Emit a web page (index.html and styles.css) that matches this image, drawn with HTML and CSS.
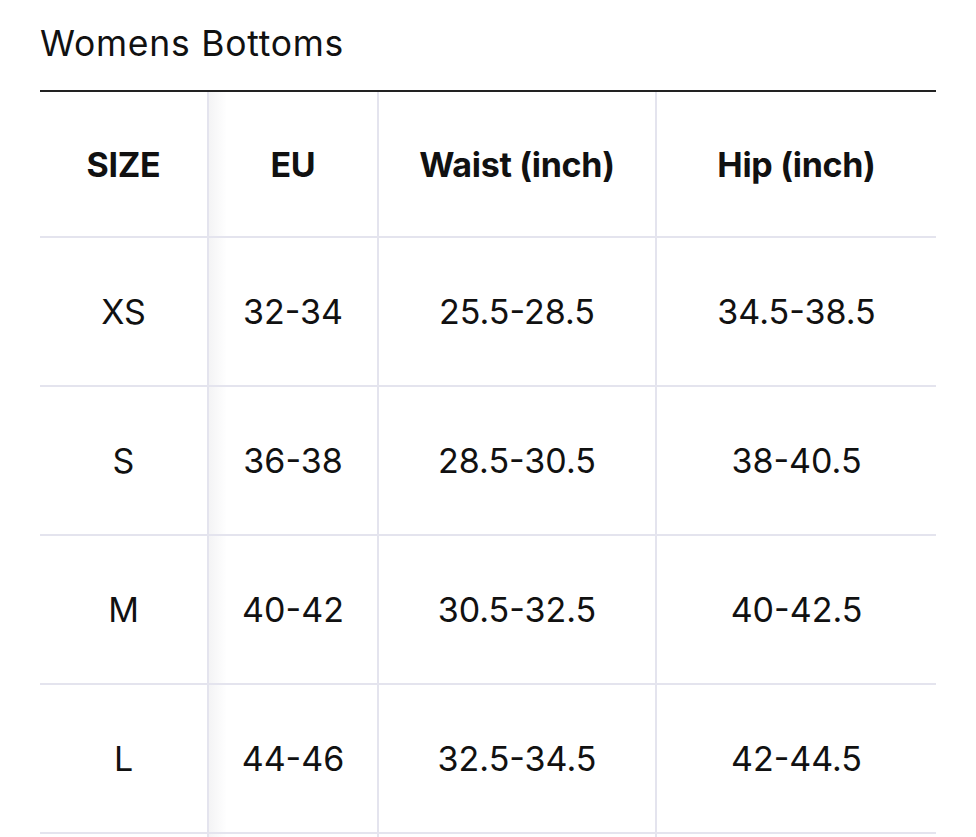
FILE: index.html
```html
<!DOCTYPE html>
<html>
<head>
<meta charset="utf-8">
<link rel="stylesheet" href="styles.css">
</head>
<body>
<div class="page">
  <div class="title">Womens Bottoms</div>
  <table class="chart">
    <colgroup>
      <col class="c1"><col class="c2"><col class="c3"><col class="c4">
    </colgroup>
    <thead>
      <tr><th>SIZE</th><th>EU</th><th>Waist (inch)</th><th>Hip (inch)</th></tr>
    </thead>
    <tbody>
      <tr><td>XS</td><td>32-34</td><td>25.5-28.5</td><td>34.5-38.5</td></tr>
      <tr><td>S</td><td>36-38</td><td>28.5-30.5</td><td>38-40.5</td></tr>
      <tr><td>M</td><td>40-42</td><td>30.5-32.5</td><td>40-42.5</td></tr>
      <tr><td>L</td><td>44-46</td><td>32.5-34.5</td><td>42-44.5</td></tr>
      <tr class="peek"><td></td><td></td><td></td><td></td></tr>
    </tbody>
  </table>
</div>
</body>
</html>
```
FILE: styles.css
```css
html, body {
  margin: 0;
  padding: 0;
  background: #ffffff;
}
body {
  font-family: Inter, "Liberation Sans", sans-serif;
  color: #111111;
  overflow: hidden;
}
.page {
  padding: 0 40px;
}
.title {
  font-size: 35.5px;
  line-height: 42px;
  padding-top: 23px;
  padding-bottom: 25px;
  border-bottom: 2px solid #222222;
  letter-spacing: 0.75px;
}
.chart {
  width: 896px;
  border-collapse: separate;
  border-spacing: 0;
  table-layout: fixed;
}
.c1 { width: 169px; }
.c2 { width: 170px; }
.c3 { width: 278px; }
.c4 { width: 279px; }
.chart th, .chart td {
  text-align: center;
  vertical-align: middle;
  border-bottom: 2px solid #e4e4ee;
  border-right: 2px solid #e4e4ee;
  padding: 0;
  font-size: 34px;
}
.chart th:last-child, .chart td:last-child {
  border-right: none;
}
.chart th {
  height: 144px;
  font-weight: 700;
  letter-spacing: -0.3px;
}
.chart td {
  height: 147px;
  font-weight: 400;
}
.chart th:nth-child(2), .chart td:nth-child(2) {
  background: linear-gradient(to right, rgba(30, 30, 60, 0.05), rgba(30, 30, 60, 0) 18px);
}
```
